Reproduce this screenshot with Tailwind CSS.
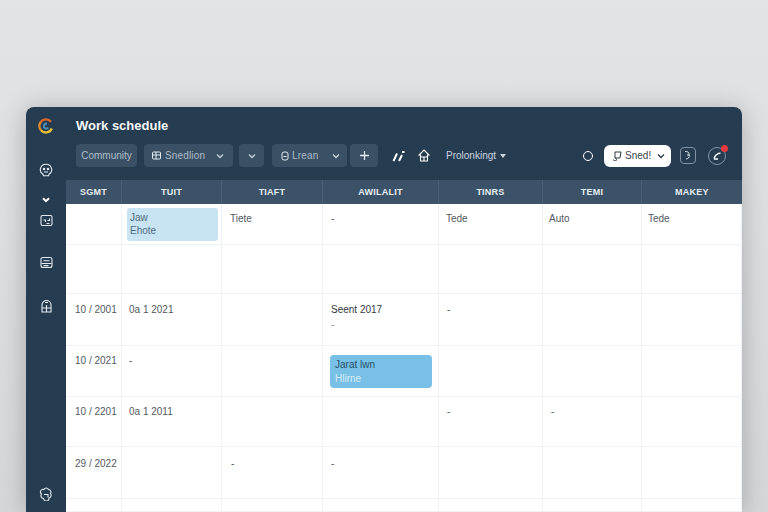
<!DOCTYPE html>
<html lang="en">
<head>
  <meta charset="UTF-8" />
  <title>Work schedule</title>
  <script src="https://cdn.jsdelivr.net/npm/@tailwindcss/browser@4"></script>
</head>
<body class="h-[512px] w-[768px] overflow-hidden bg-gradient-to-b from-[#e3e4e6] to-[#d6d7d9] font-['Liberation_Sans',sans-serif]">
  <div class="pt-[107px] pl-[26px]">
    <div class="flex h-[405px] w-[716px] overflow-hidden rounded-t-lg bg-[#253c51] shadow-[0_2px_26px_rgba(0,0,0,0.24)]">

      <!-- sidebar -->
      <div class="flex w-[40px] shrink-0 flex-col items-center pt-[11px] text-[#e4ebf0]">
        <svg class="h-[16px] w-[16px]" viewBox="0 0 16 16" fill="none" stroke-width="2.4">
          <path d="M13 3.800A6.400 6.400 0 0 0 2.800 4" stroke="#d9672c"/>
          <path d="M2.800 4A6.400 6.400 0 0 0 3 12.200" stroke="#e08a2c"/>
          <path d="M3 12.200A6.400 6.400 0 0 0 13.800 10.500" stroke="#e8bd35"/>
          <path d="M9 5.800A2.400 2.400 0 1 0 10.200 9.500" stroke="#4a90b8" stroke-width="2"/>
        </svg>
        <svg class="mt-[29px] h-[14px] w-[14px]" viewBox="0 0 14 14" fill="none" stroke="currentColor" stroke-width="1.1">
          <path d="M7 1.200a5.600 5.400 0 0 1 3 10l-.4 1.600H4.400L4 11.200A5.600 5.400 0 0 1 7 1.200Z"/>
          <circle cx="5" cy="6" r=".7" fill="currentColor"/>
          <circle cx="9" cy="6" r=".7" fill="currentColor"/>
          <path d="M5 9h4"/>
        </svg>
        <svg class="mt-[18px] h-[8px] w-[8px]" viewBox="0 0 8 8" fill="none" stroke="#ffffff" stroke-width="2">
          <path d="M1 3.200 4 6.200 7 3.200"/>
        </svg>
        <svg class="mt-[11px] h-[13px] w-[13px]" viewBox="0 0 13 13" fill="none" stroke="currentColor" stroke-width="1.1">
          <rect x="1" y="1.500" width="11" height="10" rx="1.500"/>
          <path d="M3.500 6h2v2M9.500 4.500v2h-2M6.500 9.500h3"/>
        </svg>
        <svg class="mt-[29px] h-[13px] w-[13px]" viewBox="0 0 13 13" fill="none" stroke="currentColor" stroke-width="1.1">
          <rect x="1" y="1.500" width="11" height="10" rx="2"/>
          <path d="M3.500 4.800h6M1.500 7.500h10M3.500 9.600h5"/>
        </svg>
        <svg class="mt-[30px] h-[14px] w-[13px]" viewBox="0 0 13 14" fill="none" stroke="currentColor" stroke-width="1.1">
          <path d="M2 13V6a4.500 4.500 0 0 1 9 0v7Z"/>
          <path d="M2 9h9M6.500 6v7M5 3.500h3"/>
        </svg>
        <svg class="mt-[174px] h-[14px] w-[14px]" viewBox="0 0 14 14" fill="none" stroke="currentColor" stroke-width="1.1">
          <path d="M5 2.500a2.400 2.400 0 0 1 4.500 0 2.600 2.600 0 0 1 2 4 2.800 2.800 0 0 1-1.500 4.500 2.600 2.600 0 0 1-5.500.500 2.800 2.800 0 0 1-2-4.500 2.600 2.600 0 0 1 2.500-4.500Z"/>
          <path d="M5 7.500h4v3"/>
        </svg>
      </div>

      <!-- main -->
      <div class="flex min-w-0 flex-1 flex-col">
        <div class="h-[73px] shrink-0 pl-[10px] pt-[10px]">
          <h1 class="text-[13px] leading-[18px] font-bold text-[#f4f7f9]">Work schedule</h1>
          <div class="mt-[9px] flex h-[23px] items-center text-[10px] text-[#aebdca]">
            <div class="flex h-full w-[61px] items-center justify-center rounded bg-[#3a5064]">Community</div>
            <div class="ml-[7px] flex h-full w-[89px] items-center rounded bg-[#3a5064] pl-[8px]">
              <svg class="h-[9px] w-[9px]" viewBox="0 0 9 9" fill="none" stroke="#e4ebf0"><rect x=".5" y="1" width="8" height="7" rx="1"/><path d="M.5 4h8M4 1v7"/></svg>
              <span class="ml-[4px] tracking-[0.15px]">Snedlion</span>
              <svg class="ml-[11px] h-[8px] w-[8px]" viewBox="0 0 8 8" fill="none" stroke="#c9d5de" stroke-width="1.300"><path d="M1 2.500 4 5.500 7 2.500"/></svg>
            </div>
            <div class="ml-[6px] flex h-full w-[25px] items-center justify-center rounded bg-[#3a5064]">
              <svg class="h-[8px] w-[8px]" viewBox="0 0 8 8" fill="none" stroke="#c9d5de" stroke-width="1.300"><path d="M1 2.500 4 5.500 7 2.500"/></svg>
            </div>
            <div class="ml-[8px] flex h-full w-[75px] items-center rounded bg-[#3a5064] pl-[9px]">
              <svg class="h-[10px] w-[8px]" viewBox="0 0 8 10" fill="none" stroke="#e4ebf0"><rect x="1" y="1" width="6" height="8" rx="2"/><path d="M2.500 5.500h3"/></svg>
              <span class="ml-[3px] tracking-[0.2px]">Lrean</span>
              <svg class="ml-[13px] h-[8px] w-[8px]" viewBox="0 0 8 8" fill="none" stroke="#c9d5de" stroke-width="1.300"><path d="M1 2.500 4 5.500 7 2.500"/></svg>
            </div>
            <div class="ml-[3px] flex h-full w-[28px] items-center justify-center rounded bg-[#3a5064]">
              <svg class="h-[9px] w-[9px]" viewBox="0 0 9 9" fill="none" stroke="#e4ebf0" stroke-width="1.300"><path d="M4.500 0v9M0 4.500h9"/></svg>
            </div>
            <svg class="ml-[14px] h-[12px] w-[13px]" viewBox="0 0 13 12" fill="none" stroke="#ffffff" stroke-width="2"><path d="M1.500 11 5 3.500M7 11l3-6M10 2h2.500"/></svg>
            <svg class="ml-[13px] h-[13px] w-[12px]" viewBox="0 0 12 13" fill="none" stroke="#ffffff" stroke-width="1.100"><path d="M6 1 11 6H9.500v6h-7V6H1ZM2.500 8h7M6 8v4"/></svg>
            <span class="ml-[16px] text-[#ccd7e0]">Prolonkingt</span>
            <span class="ml-[4px] h-0 w-0 border-x-[3.500px] border-t-[4px] border-x-transparent border-t-[#ccd7e0]"></span>
            <span class="ml-[77px] h-[10px] w-[10px] rounded-full border-[1.500px] border-white"></span>
            <div class="ml-[11px] flex h-[22px] w-[67px] items-center rounded-md bg-white pl-[8px] text-[#3a4652]">
              <svg class="h-[11px] w-[10px]" viewBox="0 0 10 11" fill="none" stroke="#2c3a47"><path d="M3 8V2h6l-1 6H3Zm0 0a1.500 1.500 0 1 1-1.500 1.500"/></svg>
              <span class="ml-[3px]">Sned!</span>
              <svg class="ml-[6px] h-[8px] w-[8px]" viewBox="0 0 8 8" fill="none" stroke="#2c3a47" stroke-width="1.300"><path d="M1 2.500 4 5.500 7 2.500"/></svg>
            </div>
            <div class="ml-[9px] flex h-[17px] w-[16px] items-center justify-center rounded border border-[#7f93a3]">
              <svg class="h-[11px] w-[8px]" viewBox="0 0 8 11" fill="none" stroke="#e4ebf0"><path d="M1 1.500a3.500 3.500 0 1 1 1 7.500M3 5h2"/></svg>
            </div>
            <div class="relative ml-[12px] flex h-[18px] w-[18px] items-center justify-center rounded-full border border-[#8095a5]">
              <svg class="h-[9px] w-[9px]" viewBox="0 0 9 9" fill="none" stroke="#ffffff" stroke-width="1.500"><path d="M1 7.500c1-3 3-5 6.500-5.500M1 8h4"/></svg>
              <span class="absolute right-[-3px] top-[-3px] h-[7px] w-[7px] rounded-full bg-[#e5393f]"></span>
            </div>
          </div>
        </div>

        <!-- column heads -->
        <div class="grid h-[24px] shrink-0 grid-cols-[56px_100px_101px_116px_104px_99px_100px] items-center bg-[#3b5268] text-center text-[9px] font-bold tracking-[0.25px] text-[#e6edf2]">
          <div class="border-r border-[#4a6176] leading-[24px]">SGMT</div>
          <div class="border-r border-[#4a6176] leading-[24px]">TUIT</div>
          <div class="border-r border-[#4a6176] leading-[24px]">TIAFT</div>
          <div class="border-r border-[#4a6176] leading-[24px]">AWILALIT</div>
          <div class="border-r border-[#4a6176] leading-[24px]">TINRS</div>
          <div class="border-r border-[#4a6176] leading-[24px]">TEMI</div>
          <div class="leading-[24px]">MAKEY</div>
        </div>

        <!-- schedule rows -->
        <div class="grid flex-1 grid-cols-[56px_100px_101px_116px_104px_99px_100px] grid-rows-[41px_49px_52px_51px_50px_52px_13px] bg-white text-[10px] text-[#53595f] [&>div]:border-r [&>div]:border-b [&>div]:border-[#f1f2f4]">
          <div></div>
          <div class="pl-[5px] pr-[3px] pt-[4px]"><div class="h-[33px] rounded-[3px] bg-[#c8e3f1] pl-[3px] pt-[3px] leading-[13px] text-[#4f6d7f]">Jaw<br />Ehote</div></div>
          <div class="pl-[8px] pt-[7px]">Tiete</div>
          <div class="pl-[8px] pt-[7px]">-</div>
          <div class="pl-[7px] pt-[7px]">Tede</div>
          <div class="pl-[6px] pt-[7px]">Auto</div>
          <div class="pl-[6px] pt-[7px]">Tede</div>

          <div></div><div></div><div></div><div></div><div></div><div></div><div></div>

          <div class="pl-[9px] pt-[8px]">10 / 2001</div>
          <div class="pl-[7px] pt-[8px]">0a 1 2021</div>
          <div></div>
          <div class="pl-[8px] pt-[8px] leading-[15px] text-[#33393f]">Seent 2017<br /><span class="text-[#8b9096]">-</span></div>
          <div class="pl-[8px] pt-[8px]">-</div>
          <div></div><div></div>

          <div class="pl-[9px] pt-[7px]">10 / 2021</div>
          <div class="pl-[7px] pt-[7px]">-</div>
          <div></div>
          <div class="pl-[7px] pr-[6px] pt-[9px]"><div class="h-[33px] rounded-[4px] bg-[#79c0e6] pl-[5px] pt-[3px] leading-[14px] text-[#25506b]">Jarat lwn<br /><span class="text-[#d6edf8]">Hlirne</span></div></div>
          <div></div><div></div><div></div>

          <div class="pl-[9px] pt-[7px]">10 / 2201</div>
          <div class="pl-[7px] pt-[7px]">0a 1 2011</div>
          <div></div><div></div>
          <div class="pl-[8px] pt-[7px]">-</div>
          <div class="pl-[8px] pt-[7px]">-</div>
          <div></div>

          <div class="pl-[9px] pt-[9px]">29 / 2022</div>
          <div></div>
          <div class="pl-[9px] pt-[9px]">-</div>
          <div class="pl-[8px] pt-[9px]">-</div>
          <div></div><div></div><div></div>

          <div></div><div></div><div></div><div></div><div></div><div></div><div></div>
        </div>
      </div>
    </div>
  </div>
</body>
</html>
